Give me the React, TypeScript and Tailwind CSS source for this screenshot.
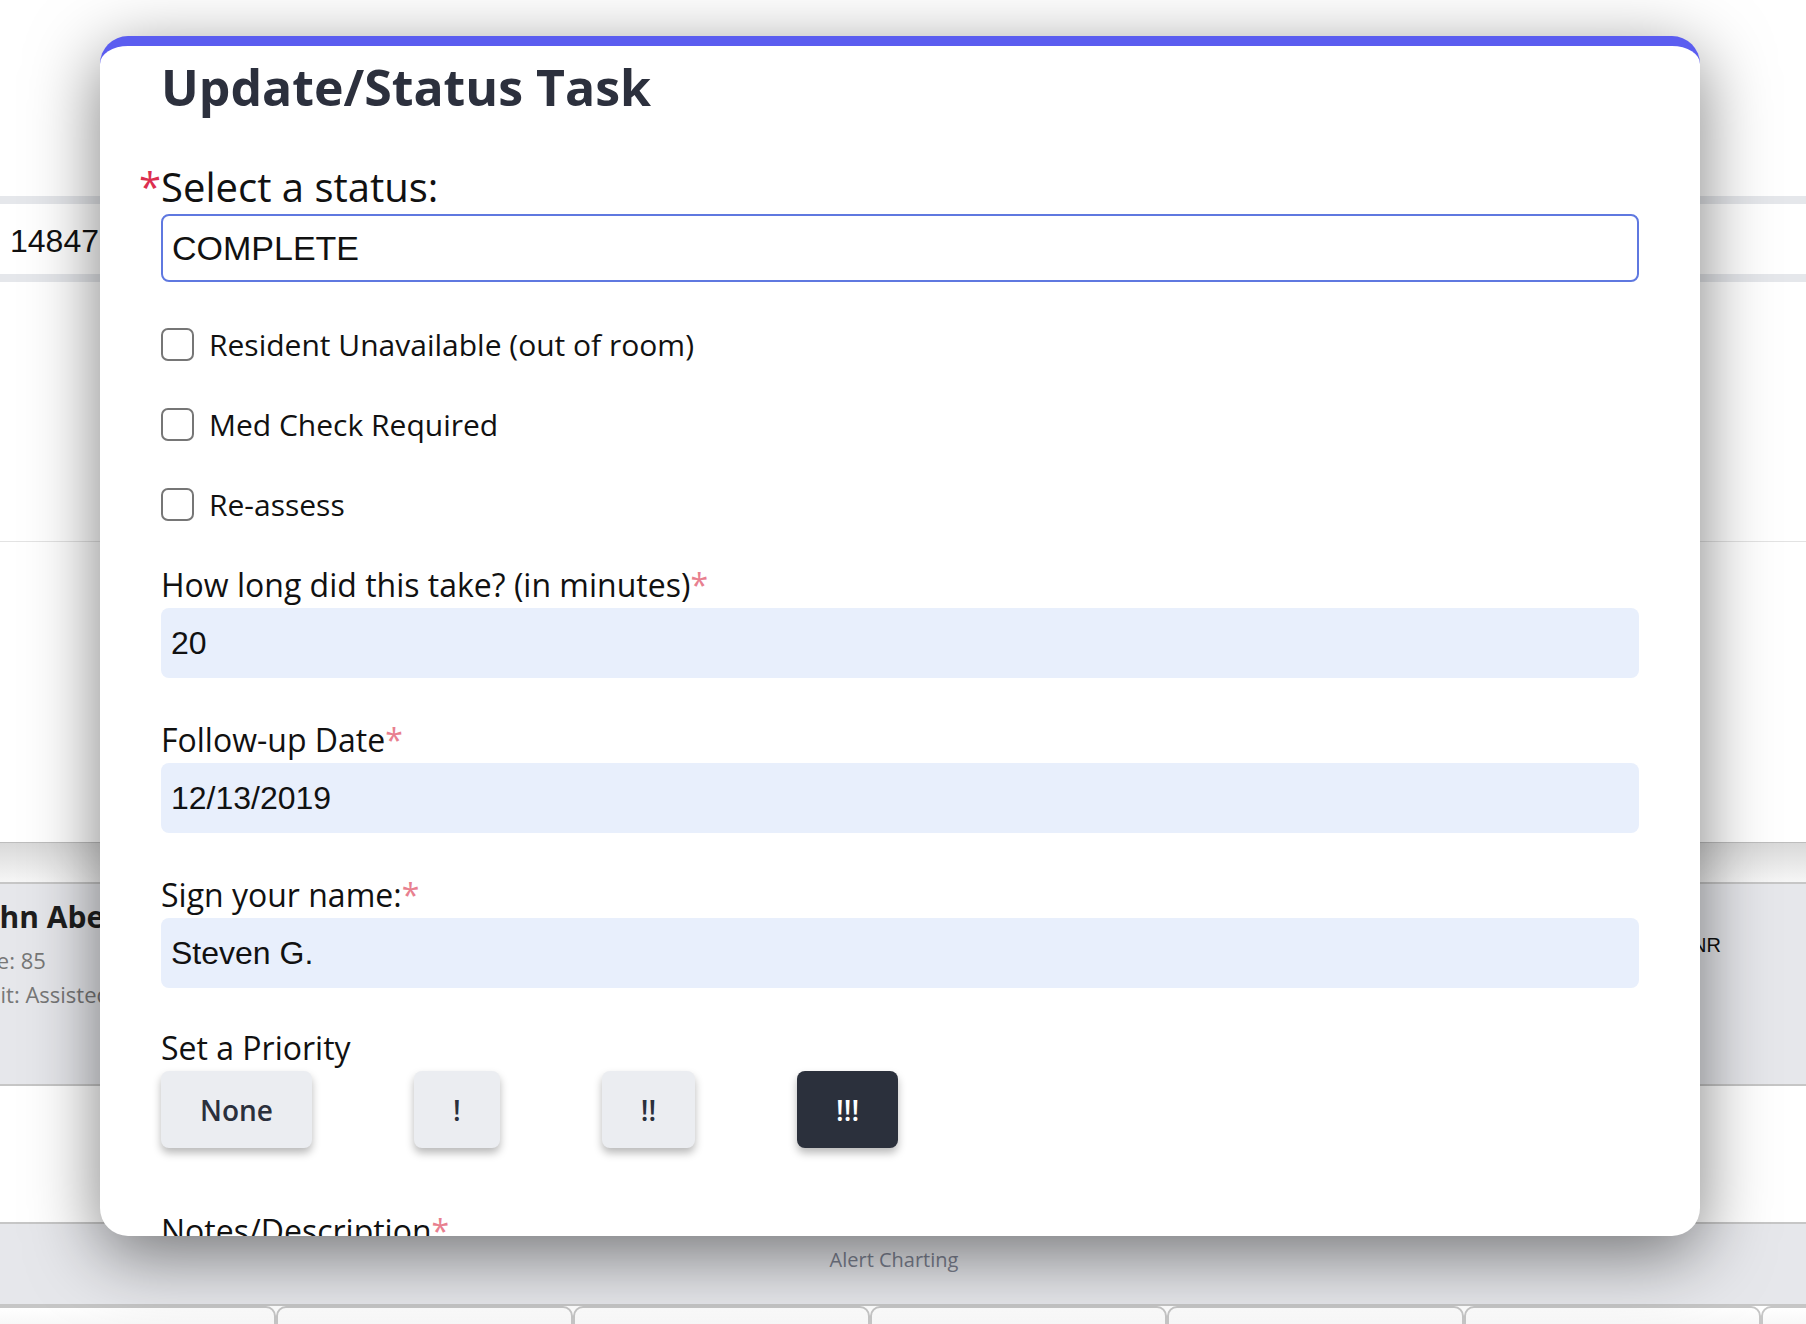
const checks = ["Resident Unavailable (out of room)", "Med Check Required", "Re-assess"];

const fields = [
  { label: "How long did this take? (in minutes)", value: "20" },
  { label: "Follow-up Date", value: "12/13/2019" },
  { label: "Sign your name:", value: "Steven G." },
];

const priorities = [
  { label: "None", active: false },
  { label: "!", active: false },
  { label: "!!", active: false },
  { label: "!!!", active: true },
];

function Star() {
  return <span className="text-[#e8808f]">*</span>;
}

function Background() {
  return (
    <div>
      <div className="h-[196px]" />
      <div className="h-2 bg-[#e5e7eb]" />
      <div className="flex h-[70px] items-center pl-[10px] pt-[4px] font-['Liberation_Sans',Arial,sans-serif] text-[32px] text-[#111]">
        14847
      </div>
      <div className="h-2 bg-[#e5e7eb]" />
      <div className="h-[259px]" />
      <div className="h-[301px] border-t border-[#e3e3e3]" />
      <div className="h-[40px] border-t border-[#bdbdbd] bg-gradient-to-b from-[#d9d9d9] to-[#f6f6f6]" />
      <div className="flex h-[202px] justify-between border-t-2 border-[#c6c6c6] bg-[#e6e7eb]">
        <div className="ml-[-29px] pt-[13px]">
          <div className="text-[30px] font-bold leading-[40px] text-[#1e1e1e]">John Abernathy</div>
          <div className="mt-[6px] text-[22px] leading-[34px] text-[#777]">Age: 85</div>
          <div className="text-[22px] leading-[34px] text-[#777]">Unit: Assisted Living</div>
        </div>
        <div className="pr-[85px] pt-[46px] font-['Liberation_Sans',Arial,sans-serif] text-[20px] text-[#111]">
          DNR
        </div>
      </div>
      <div className="h-[138px] border-t-2 border-[#c6c6c6]" />
      <div className="flex h-[82px] justify-center border-t-2 border-[#c6c6c6] bg-[#e6e7eb] pr-[18px] pt-[22px]">
        <span className="text-[20px] leading-[28px] text-[#7c8190]">Alert Charting</span>
      </div>
      <div className="ml-[-21px] flex border-t-2 border-[#c6c6c6]">
        {[0, 1, 2, 3, 4, 5, 6].map((i) => (
          <div
            key={i}
            className="h-[30px] w-[297px] shrink-0 rounded-t-[10px] border-2 border-[#c6c6c6] bg-gradient-to-b from-white to-[#f3f3f3]"
          />
        ))}
      </div>
    </div>
  );
}

function Modal() {
  return (
    <div className="absolute left-[100px] top-[36px] h-[1200px] w-[1600px] overflow-hidden rounded-[28px] border-t-[10px] border-[#5b5df0] bg-white px-[61px] shadow-[0_18px_70px_rgba(0,0,0,0.5)]">
      <h1 className="mt-[11px] text-[50px] font-bold leading-[60px] text-[#2c303d]">Update/Status Task</h1>

      <div className="mt-[48px] text-[40px] leading-[44px] text-[#111]">
        <span className="ml-[-22px] text-[#dc2f4f]">*</span>Select a status:
      </div>
      <div className="mt-[5px] flex h-[68px] items-center rounded-[8px] border-2 border-[#5f78e0] pl-[9px] font-['Liberation_Sans',Arial,sans-serif] text-[34px] text-[#111]">
        COMPLETE
      </div>

      <div className="mt-[42px] flex flex-col gap-[40px]">
        {checks.map((c) => (
          <label key={c} className="flex h-[40px] items-center gap-[15px] text-[30px] text-[#111]">
            <input
              type="checkbox"
              className="h-[33px] w-[33px] shrink-0 appearance-none rounded-[7px] border-2 border-[#767676] bg-white"
            />
            {c}
          </label>
        ))}
      </div>

      {fields.map((f, i) => (
        <div key={f.label}>
          <div className={i === 0 ? "mt-[43px] text-[32px] leading-[36px] text-[#111]" : "mt-[44px] text-[32px] leading-[36px] text-[#111]"}>
            {f.label}
            <Star />
          </div>
          <input
            readOnly
            defaultValue={f.value}
            className="mt-[5px] block h-[70px] w-full rounded-[8px] bg-[#e8effc] pl-[10px] font-['Liberation_Sans',Arial,sans-serif] text-[32px] text-[#111] outline-none"
          />
        </div>
      ))}

      <div className="mt-[42px] text-[32px] leading-[36px] text-[#111]">Set a Priority</div>
      <div className="mt-[5px] flex gap-[102px]">
        {priorities.map((p) => (
          <button
            key={p.label}
            className={
              p.active
                ? "h-[77px] rounded-[8px] bg-[#2b303c] px-[39px] text-[28px] font-semibold text-white shadow-[0_5px_8px_rgba(0,0,0,0.28)]"
                : "h-[77px] rounded-[8px] bg-[#ebedf1] px-[39px] text-[28px] font-semibold text-[#2b303c] shadow-[0_5px_8px_rgba(0,0,0,0.28)]"
            }
          >
            {p.label}
          </button>
        ))}
      </div>

      <div className="mt-[65px] text-[32px] leading-[36px] text-[#111]">
        Notes/Description
        <Star />
      </div>
      <textarea className="mt-[4px] block h-[160px] w-full rounded-[8px] bg-[#e8effc]" />
    </div>
  );
}

export default function App() {
  return (
    <div className="relative h-[1324px] w-[1806px] overflow-hidden bg-white font-['Open_Sans',sans-serif]">
      <Background />
      <Modal />
    </div>
  );
}
